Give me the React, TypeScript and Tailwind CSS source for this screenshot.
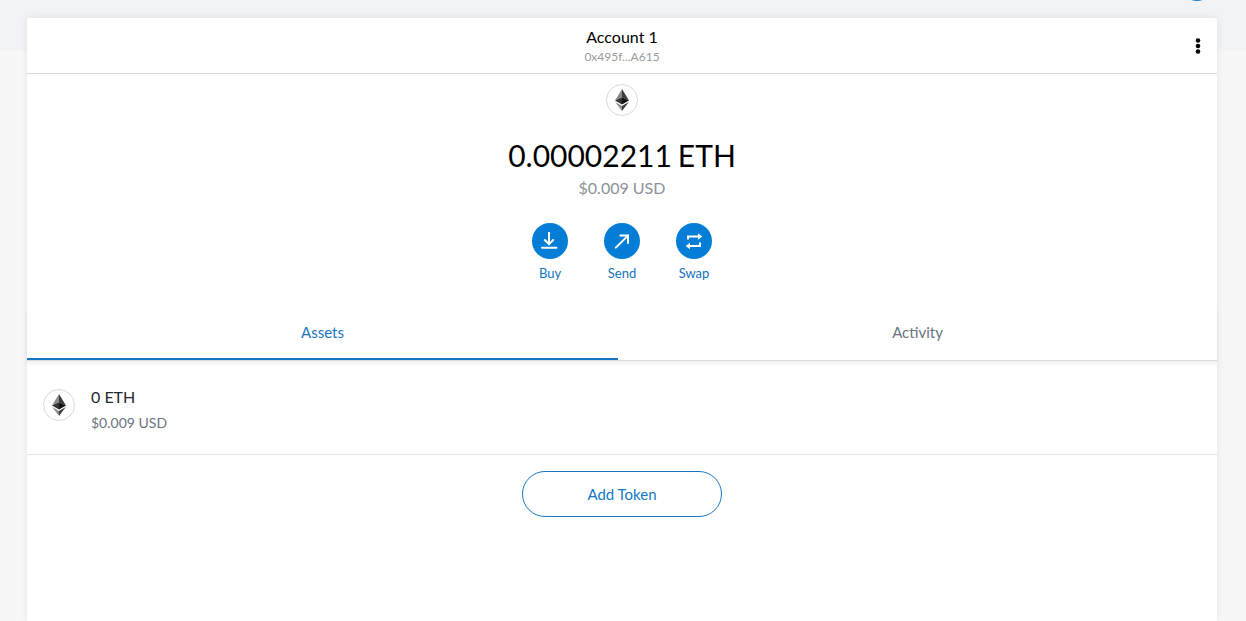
import { useState } from "react";
import type { ReactNode } from "react";

const EthIcon = () => (
  <span className="flex size-8 shrink-0 items-center justify-center rounded-full border border-[#d6d9dc] bg-white">
    <svg viewBox="0 0 14 22" className="h-[22px] w-[14px]" aria-hidden="true">
      <path d="M7 0L0 11.4L7 8.3Z" fill="#8a8a8a" />
      <path d="M7 0L14 11.4L7 8.3Z" fill="#3c3c3b" />
      <path d="M0 11.4L7 8.3V15.4Z" fill="#343434" />
      <path d="M14 11.4L7 8.3V15.4Z" fill="#141414" />
      <path d="M0.2 13L7 17V22Z" fill="#8c8c8c" />
      <path d="M13.8 13L7 17V22Z" fill="#3c3c3b" />
    </svg>
  </span>
);

const BuyIcon = () => (
  <svg viewBox="0 0 18 18" className="size-[18px]" fill="none" stroke="white" strokeWidth="2" strokeLinecap="round" aria-hidden="true">
    <path d="M8 0.8V11.8" />
    <path d="M3.8 8L8 12.2L12.2 8" />
    <path d="M1 15.7H15.4" />
  </svg>
);

const SendIcon = () => (
  <svg viewBox="0 0 18 18" className="size-[18px]" fill="none" stroke="white" strokeWidth="2" strokeLinecap="round" aria-hidden="true">
    <path d="M2.8 15.6L15 3.6" />
    <path d="M7.4 3.6H15V11" />
  </svg>
);

const SwapIcon = () => (
  <svg viewBox="0 0 18 18" className="size-[18px]" aria-hidden="true">
    <path d="M3 7.5V4.5H13M15 10.5V14H5" fill="none" stroke="white" strokeWidth="2" />
    <path d="M13 1.2L17.3 4.5L13 7.8Z" fill="white" />
    <path d="M5 10.7L0.7 14L5 17.3Z" fill="white" />
  </svg>
);

const ActionButton = ({ label, children }: { label: string; children: ReactNode }) => (
  <button type="button" className="flex w-[72px] flex-col items-center gap-1 text-[13px] leading-5 text-[#1272bd]">
    <span className="flex size-9 items-center justify-center rounded-full bg-[#037dd6]">{children}</span>
    {label}
  </button>
);

const tabs = ["Assets", "Activity"];

export default function App() {
  const [activeTab, setActiveTab] = useState("Assets");

  return (
    <div className="relative min-h-screen overflow-hidden bg-[#f7f7f7] pt-[18px] pr-[29px] pl-[27px] font-['Lato',sans-serif]">
      {/* App bar behind the card */}
      <div className="absolute inset-x-0 top-0 h-[51px] bg-[#f2f3f4]">
        <span className="absolute -top-[31px] right-[33px] size-8 rounded-full bg-[#1f7fc4]" />
      </div>

      <main className="relative flex min-h-[calc(100vh-18px)] flex-col bg-white shadow-[0_0_8px_rgba(0,0,0,0.08)]">
        {/* Account bar */}
        <header className="grid grid-cols-[1fr_auto_1fr] items-center border-b border-[#d6d9dc] px-4">
          <button type="button" className="col-start-2 pt-[7px] pb-[9px] text-center">
            <span className="block text-base leading-6 text-black">Account 1</span>
            <span className="block text-xs leading-[15px] text-[#989a9b]">0x495f...A615</span>
          </button>
          <button type="button" aria-label="Account options" className="justify-self-end">
            <svg viewBox="0 0 6 16" className="h-4 w-[6px]" aria-hidden="true">
              <circle cx="3" cy="2.5" r="2.3" />
              <circle cx="3" cy="8" r="2.3" />
              <circle cx="3" cy="13.5" r="2.3" />
            </svg>
          </button>
        </header>

        {/* Balance */}
        <section className="flex flex-col items-center pt-[10px]">
          <EthIcon />
          <p className="mt-4 flex gap-[6px] text-[30px] leading-[46px] text-black">
            <span>0.00002211</span>
            <span>ETH</span>
          </p>
          <p className="text-base leading-5 text-[#8b9199]">$0.009 USD</p>
          <div className="mt-[25px] flex">
            <ActionButton label="Buy">
              <BuyIcon />
            </ActionButton>
            <ActionButton label="Send">
              <SendIcon />
            </ActionButton>
            <ActionButton label="Swap">
              <SwapIcon />
            </ActionButton>
          </div>
        </section>

        {/* Tabs */}
        <nav className="mt-[23px] flex border-b border-[#d6d9dc] shadow-[0_3px_4px_rgba(0,0,0,0.06)]">
          {tabs.map((tab) => (
            <button
              key={tab}
              type="button"
              onClick={() => setActiveTab(tab)}
              className={`flex-auto border-b-2 py-[15px] text-[15px] leading-[22px] ${
                activeTab === tab ? "border-[#1577c4] text-[#1577c4]" : "border-transparent text-[#6a737d]"
              }`}
            >
              {tab}
            </button>
          ))}
        </nav>

        {/* Assets */}
        <button type="button" className="flex items-start gap-4 border-b border-[#e2e4e6] px-4 pt-[23px] pb-[19px] text-left">
          <span className="pt-[5px]">
            <EthIcon />
          </span>
          <span>
            <span className="block text-base leading-[26px] text-[#24292e]">0 ETH</span>
            <span className="block text-sm leading-[25px] text-[#6a737d]">$0.009 USD</span>
          </span>
        </button>
        <button
          type="button"
          className="mt-4 h-[46px] w-[200px] self-center rounded-full border border-[#1577c4] text-[15px] text-[#1577c4]"
        >
          Add Token
        </button>
      </main>
    </div>
  );
}
